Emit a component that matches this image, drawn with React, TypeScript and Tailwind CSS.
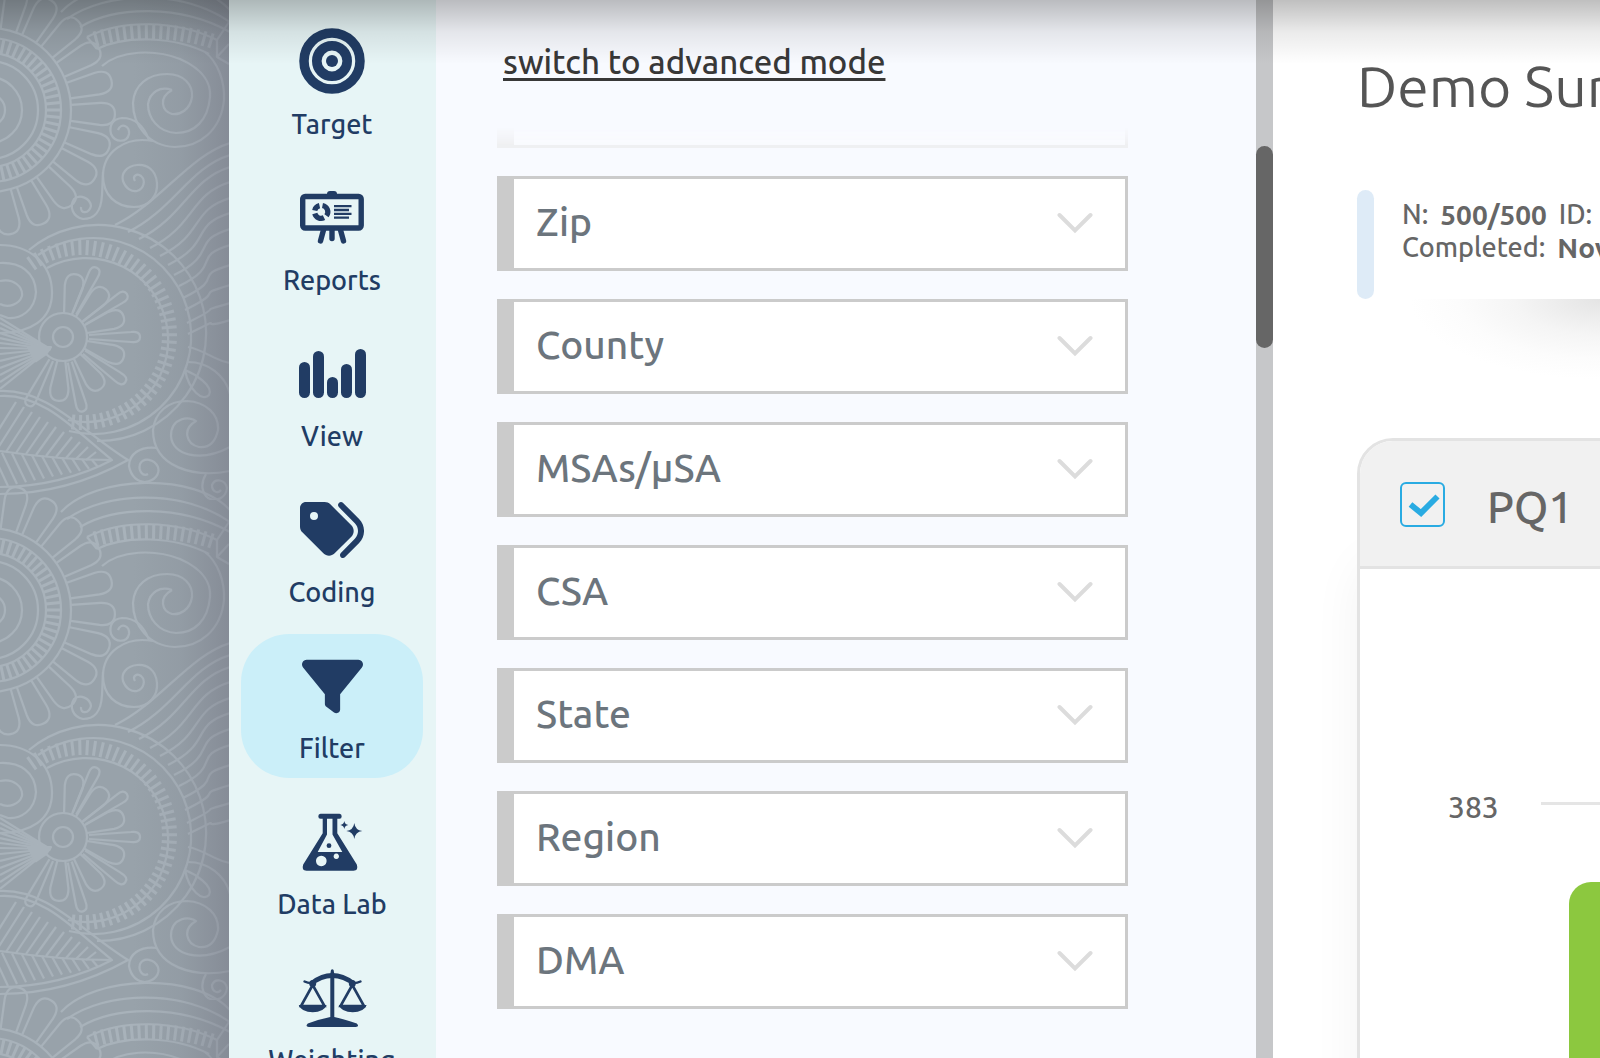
import type { ReactNode } from 'react';
import { FaFilter, FaTags } from 'react-icons/fa6';

interface NavItem {
  id: string;
  label: string;
  icon: ReactNode;
}

const FILTERS = ['Zip', 'County', 'MSAs/µSA', 'CSA', 'State', 'Region', 'DMA'];

const ACTIVE_ITEM = 'filter';

const VIEW_BARS = [
  { x: 3, y: 24 },
  { x: 17, y: 13 },
  { x: 31, y: 39 },
  { x: 45, y: 26 },
  { x: 59, y: 11 },
];

function TargetIcon() {
  return (
    <svg viewBox="0 0 72 72" className="size-[72px]" fill="none" stroke="currentColor" aria-hidden="true">
      <circle cx="36" cy="35" r="28" strokeWidth="9.5" />
      <circle cx="36" cy="35" r="15.2" strokeWidth="9.6" />
      <circle cx="36" cy="35" r="6" fill="currentColor" stroke="none" />
    </svg>
  );
}

function ReportsIcon() {
  return (
    <svg viewBox="0 0 72 72" className="size-[72px]" fill="none" stroke="currentColor" aria-hidden="true">
      <path d="M31 12q0-3 3-3h4q3 0 3 3z" fill="currentColor" stroke="none" />
      <rect x="6.7" y="14.5" width="58.5" height="31.5" rx="2.5" strokeWidth="5.4" />
      <path d="M27.5 48 24.5 59M36 48v8.500M44.500 48l3 11" strokeWidth="5.4" strokeLinecap="round" />
      <path d="M26.500 23.500a6.500 6.500 0 0 1 4 10.300M28 35.700a6.500 6.500 0 0 1-9.200-4.200M18.700 28.500a6.500 6.500 0 0 1 4.800-4.900" strokeWidth="5.2" />
      <path d="M38 24.200h17.500M38 28h15M38 31.800h17.500M38 35.600h15" strokeWidth="2.3" />
    </svg>
  );
}

function ViewIcon() {
  return (
    <svg viewBox="0 0 72 72" className="size-[72px]" fill="currentColor" aria-hidden="true">
      {VIEW_BARS.map(({ x, y }) => (
        <rect key={x} x={x} y={y} width="11" height={60 - y} rx="5.500" />
      ))}
    </svg>
  );
}

function DataLabIcon() {
  return (
    <svg viewBox="0 0 72 72" className="size-[72px]" fill="currentColor" aria-hidden="true">
      <path
        fillRule="evenodd"
        d="M24.500 7.700h19q2.200 0 2.200 2.500t-2.200 2.500h-2.200v14.600L60.800 58.500q2 6.200-3.300 6.200h-47q-5.300 0-3.300-6.200L26.700 27.300V12.700h-2.200q-2.200 0-2.200-2.500t2.200-2.500zM31 12.700v15.800L21.700 46h24.600L36.500 28.500V12.700zM25.300 49.700a5.300 5.300 0 1 0 .01 0zM40.300 47.600a2.700 2.700 0 1 0 .01 0z"
      />
      <circle cx="33" cy="39.700" r="2.400" />
      <path d="M58.300 17q.9 7.100 8 8-7.100.9-8 8-.9-7.100-8-8 7.100-.9 8-8zM48.300 15q.5 3.500 4 4-3.500.5-4 4-.5-3.500-4-4 3.500-.5 4-4z" />
    </svg>
  );
}

function WeightingIcon() {
  return (
    <svg viewBox="0 0 72 72" className="size-[72px]" fill="currentColor" aria-hidden="true">
      <path d="M35 8q1.300-1.500 2.600 0l.7 4v43q10 2 22.500 6.500 3 3.300-1 3.500h-47q-4-.2-1-3.500Q24 57 34.300 55V12z" />
      <path d="M15 19Q25 11 36.300 11T58 19l-1 5Q47 16 36.300 16T16 24z" />
      <circle cx="16.700" cy="21.500" r="3.500" />
      <circle cx="56.300" cy="21.500" r="3.500" />
      <path d="M8.500 19.500q4 2 8 1.500M64.500 19.500q-4 2-8 1.500" fill="none" stroke="currentColor" strokeWidth="2.400" strokeLinecap="round" />
      <path d="M16.700 23 5 44h23.500zM56.300 23 44.500 44H68z" fill="none" stroke="currentColor" strokeWidth="2.600" />
      <path d="M2.700 43h28q-3 7.300-14 7.300T2.700 43zM42.700 43h28q-3 7.300-14 7.300T42.700 43z" />
    </svg>
  );
}

const NAV_ITEMS: NavItem[] = [
  { id: 'target', label: 'Target', icon: <TargetIcon /> },
  { id: 'reports', label: 'Reports', icon: <ReportsIcon /> },
  { id: 'view', label: 'View', icon: <ViewIcon /> },
  { id: 'coding', label: 'Coding', icon: <FaTags className="size-[64px]" /> },
  { id: 'filter', label: 'Filter', icon: <FaFilter className="size-[61px]" /> },
  { id: 'data-lab', label: 'Data Lab', icon: <DataLabIcon /> },
  { id: 'weighting', label: 'Weighting', icon: <WeightingIcon /> },
];

// Radial ticks between two radii, angles in degrees
function ticks(cx: number, cy: number, r1: number, r2: number, from: number, to: number, step: number) {
  let d = '';
  for (let a = from; a <= to; a += step) {
    const c = Math.cos((a * Math.PI) / 180);
    const s = Math.sin((a * Math.PI) / 180);
    d += `M${cx + r1 * c} ${cy + r1 * s}L${cx + r2 * c} ${cy + r2 * s}`;
  }
  return d;
}

// Petal lying along the x axis, rotated into place by the caller
function petal(r1: number, r2: number, w: number, base: number) {
  const shoulder = r2 - w;
  return `M${r1} ${-base}L${shoulder - 4} ${-w}Q${r2} ${-w - 1} ${r2} 0Q${r2} ${w + 1} ${shoulder - 4} ${w}L${r1} ${base}`;
}

const OUTER_PETALS = Array.from({ length: 23 }, (_, i) => i * 15.65 + 2);
const WIDE_PETALS = [-78, -48, -19, 19, 54, 94];
const THIN_PETALS = [-64, -34, 0, 36, 75, 117];
const WAVES = [
  [115, 225, 143],
  [128, 232, 155],
  [139, 239, 167],
  [150, 248, 182],
  [160, 256, 198],
  [168, 265, 213],
  [174, 275, 229],
  [179, 286, 245],
  [183, 298, 265],
  [185, 310, 285],
  [187, 323, 303],
  [188, 334, 320],
];
const FAN = [318, 323, 328, 333, 338, 343, 348, 354, 361, 368, 375, 382, 389];
const RIBS = [0, 1, 2, 3, 4, 5, 6, 7, 8, 9, 10];

function PaisleyTile() {
  return (
    <g fill="none" stroke="#a8b2ba" strokeWidth="2.200" strokeLinejoin="round">
      {/* Big rosette on the left edge */}
      {[82, 72, 57, 49, 33, 16].map((r) => (
        <circle key={r} cx="-11" cy="110" r={r} />
      ))}
      <path d={ticks(-11, 110, 57, 72, -90, 90, 6)} strokeWidth="3" />
      {OUTER_PETALS.map((a) => (
        <path key={a} d={petal(82, 126, 11, 8)} transform={`translate(-11 110) rotate(${a})`} />
      ))}

      {/* Arches */}
      <path d="M61 12C95 -25 195 -28 230 10M67 19C105 -8 180 -12 230 22M80 27C115 6 180 4 230 32" />
      <path d="M87 37C120 20 175 19 217 40M97 49C125 35 175 36 209 54M87 37 97 49" />
      <path d={ticks(150, 240, 201, 216, -105, -73, 2)} strokeWidth="3" />
      <path d="M217 40 229 22M217 40V57L229 44M217 57 229 64" />

      {/* Spirals */}
      <path d="M102 66C120 50 155 49 180 59C205 70 211 85 210 97C208 120 195 133 176 133C158 132 148 118 148 104C150 92 160 86 172 90" />
      <path d="M205 52C218 62 225 82 224 100C221 130 200 147 175 147C148 146 133 125 133 103C134 85 148 74 167 74C184 74 193 85 192 97C190 110 180 115 172 114C162 111 158 98 172 90" />
      <path d="M153 141C125 136 103 152 103 176C103 195 116 207 134 207C150 207 158 195 157 183C156 170 147 164 137 165C126 166 121 174 123 181C126 189 132 192 137 191C144 189 146 180 141 176C137 173 132 176 135 181" />
      <path d="M149 140C143 123 132 118 122 118C112 119 109 126 111 134C115 143 127 143 129 134C130 126 121 122 118 130" />
      <path d="M103 172L102 195C101 213 94 219 83 219C73 217 69 207 74 199C80 194 90 198 91 206C89 214 80 214 81 207" />
      <path d="M0 245C28 245 52 262 52 293C52 320 30 333 0 333M0 263C20 262 35 272 36 292C35 311 20 319 8 318L0 315M0 281C14 278 23 287 22 296C19 305 8 308 0 304" />

      {/* Flower wheel */}
      <path d="M29 250A108 108 0 1 1 97 441M38 255A98 98 0 1 1 69 431M47 268A82 82 0 1 1 68 420" />
      <path d={ticks(82, 335, 80, 95, -125, 98, 4.800)} strokeWidth="3" />
      <circle cx="63" cy="337" r="24" />
      <circle cx="63" cy="337" r="10" />
      {WIDE_PETALS.map((a) => (
        <path key={a} d={petal(24, 64, 9, 4)} transform={`translate(63 337) rotate(${a})`} />
      ))}
      {THIN_PETALS.map((a) => (
        <path key={a} d={petal(26, 77, 5, 2)} transform={`translate(63 337) rotate(${a})`} />
      ))}
      {FAN.map((y) => (
        <path key={y} d={`M0 ${y}L50 349`} />
      ))}
      <path d="M28 347H51L46 354 36 361z" fill="#a8b2ba" />

      {/* Waves */}
      {WAVES.map(([x, y, end]) => (
        <path key={x} d={`M${x} ${y}C${x + 45} ${y - 22} 190 ${end + 12} 230 ${end}`} />
      ))}
      <path d="M188 347C205 350 215 361 230 363M188 362C208 362 225 375 230 394" />
      <path d="M185 370C195 374 214 386 209 395C203 402 189 391 185 370z" />

      {/* Leaf */}
      <path d="M0 391C48 389 80 430 128 460C85 484 40 494 0 494" />
      <path d="M0 396C42 393 75 430 112 460C80 477 40 487 0 487M0 451C40 457 70 460 112 460" />
      {RIBS.map((i) => (
        <path
          key={i}
          d={`M${i * 10 - 14} ${450 + i}L${i * 8 + 16} ${402 + i * 5}M${i * 10 - 8} ${452 + i * 0.8}L${i * 9 + 8} ${486 - i * 1.9}`}
        />
      ))}

      {/* Lower spirals */}
      <path d="M230 471C195 478 153 468 153 430C155 412 168 401 187 401C206 402 219 414 218 430C215 444 208 448 199 447C186 444 182 429 196 421C190 416 171 417 171 436C172 455 200 463 230 447" />
      <path d="M157 448C140 446 129 454 129 466C131 477 138 482 145 482C155 481 160 474 158 467C154 459 144 457 140 464C138 471 143 477 148 474" />
      <path d="M206 474C200 484 202 493 208 498C217 503 226 497 227 488C225 479 215 478 212 485C212 492 218 494 221 490" />
    </g>
  );
}

function PaisleyBackdrop() {
  return (
    <div className="relative w-[229px] shrink-0 overflow-hidden bg-[#98a2aa]">
      <svg className="h-full w-full" aria-hidden="true">
        <defs>
          <pattern id="paisley" width="230" height="500" patternUnits="userSpaceOnUse">
            <PaisleyTile />
            <g transform="translate(0 500)">
              <PaisleyTile />
            </g>
          </pattern>
        </defs>
        <rect width="100%" height="100%" fill="url(#paisley)" />
      </svg>
      <div className="absolute inset-y-0 right-0 w-24 bg-linear-to-r from-transparent via-[#6b6f7c]/12 to-[#6b6c7a]/40"></div>
    </div>
  );
}

function Sidebar() {
  return (
    <nav className="flex w-[207px] shrink-0 flex-col gap-3 bg-[#e7f5f6] pt-[10px] pr-[13px] pl-3">
      {NAV_ITEMS.map((item) => (
        <a
          key={item.id}
          href={`#${item.id}`}
          className={`flex h-36 shrink-0 flex-col items-center rounded-[48px] pt-4 text-[27px] leading-9 font-medium text-[#213c64] ${
            item.id === ACTIVE_ITEM ? 'bg-[#cbeff9]' : ''
          }`}
        >
          <span className="mb-2 flex size-[72px] items-center justify-center">{item.icon}</span>
          {item.label}
        </a>
      ))}
    </nav>
  );
}

function FilterSelect({ label }: { label: string }) {
  return (
    <div className="relative">
      <select
        aria-label={label}
        className="block h-[95px] w-full appearance-none rounded-none border-[3px] border-l-[17px] border-[#cbcbcb] bg-white pb-[2px] pl-[22px] text-[39px] font-medium text-[#6c757d]"
      >
        <option>{label}</option>
      </select>
      <svg viewBox="0 0 36 22" className="pointer-events-none absolute top-9 right-[35px] h-[22px] w-9" aria-hidden="true">
        <path d="M2.500 3 18 18.500 33.500 3" fill="none" stroke="#dcdcdc" strokeWidth="4" strokeLinecap="round" />
      </svg>
    </div>
  );
}

function FilterPanel() {
  return (
    <section className="w-[820px] shrink-0 bg-[#f8faff] pr-32 pl-[61px]">
      <div className="flex h-32 items-center pb-1 pl-[6px]">
        <a
          href="#advanced"
          className="text-[33px] leading-10 font-medium text-[#383838] underline decoration-[3px] underline-offset-4"
        >
          switch to advanced mode
        </a>
      </div>
      {/* Tail of the list scrolled under the header */}
      <div className="mb-7 h-5 border-r-[3px] border-b-[3px] border-l-[17px] border-[#eeeeef] bg-[#fafbfe] mask-t-from-20% opacity-80"></div>
      <div className="flex flex-col gap-7">
        {FILTERS.map((label) => (
          <FilterSelect key={label} label={label} />
        ))}
      </div>
    </section>
  );
}

function SurveyPanel() {
  return (
    <main className="min-w-0 flex-1 overflow-hidden bg-white pl-[84px] whitespace-nowrap">
      <h1 className="pt-[46px] pb-16 text-[57px] leading-[80px] font-normal text-[#555]">Demo Survey</h1>
      <div className="flex h-[109px] gap-7">
        <div className="w-[17px] shrink-0 rounded-full bg-[#deebf7]"></div>
        <div className="pt-2 text-[27px] leading-[33px] font-medium text-[#666]">
          <p className="flex gap-3">
            <span>N:</span>
            <b className="text-[28px]">500/500</b>
            <span>ID:</span>
          </p>
          <p className="flex gap-3">
            <span>Completed:</span>
            <b className="text-[28px]">Nov</b>
          </p>
        </div>
      </div>
      <div className="ml-11 h-[139px] bg-[radial-gradient(ellipse_190px_80px_at_100%_0,#e4e4e4,#f5f5f5_45%,#fcfcfc_75%,white)]"></div>

      <div className="h-[900px] w-[900px] rounded-[36px] border-[3px] border-[#e3e3e3] bg-white shadow-[0_120px_50px_rgba(0,0,0,0.05)]">
        <div className="flex h-32 items-center gap-[42px] rounded-t-[33px] border-b-[3px] border-[#e3e3e3] bg-[#f1f1f1] pt-[2px] pl-10">
          <span className="relative flex size-[45px]">
            <input
              id="pq1"
              type="checkbox"
              defaultChecked
              className="size-[45px] appearance-none rounded-md border-2 border-[#29abe2]"
            />
            <svg viewBox="0 0 45 45" className="pointer-events-none absolute inset-0" aria-hidden="true">
              <path d="M10.500 22.500 21 31 37.500 14.500" fill="none" stroke="#29abe2" strokeWidth="5.800" />
            </svg>
          </span>
          <label htmlFor="pq1" className="pt-1 text-[44px] font-medium text-[#666]">
            PQ1
          </label>
        </div>
        <div className="flex pt-[218px] pl-[88px] text-[30px] leading-10 font-medium text-[#666]">
          <span className="w-[93px]">383</span>
          <div className="flex-1">
            <div className="mt-[15px] h-[3px] bg-[#e5e5e5]"></div>
            <div className="mt-[77px] ml-7 h-[400px] w-40 rounded-t-[22px] bg-[#8cc83f]"></div>
          </div>
        </div>
      </div>
    </main>
  );
}

export default function App() {
  return (
    <div className="relative flex h-screen overflow-hidden font-['Ubuntu','Noto_Sans',sans-serif]">
      <PaisleyBackdrop />
      <Sidebar />
      <FilterPanel />
      <div className="w-[17px] shrink-0 bg-[#c6c7c9] pt-[146px]">
        <div className="h-[202px] rounded-full bg-[#666]"></div>
      </div>
      <SurveyPanel />

      {/* Shadow of the bar above */}
      <div className="pointer-events-none absolute inset-x-0 top-0 h-16 bg-linear-to-b from-black/25 via-black/8 to-transparent"></div>
    </div>
  );
}
